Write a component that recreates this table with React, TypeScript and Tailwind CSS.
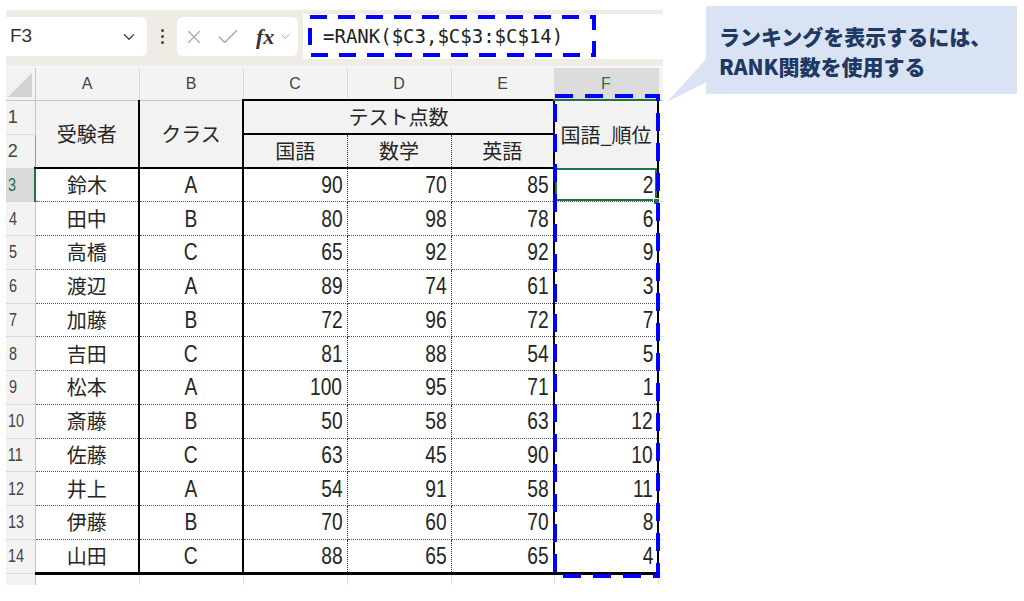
import { ChevronDown, X, Check } from 'lucide-react';

const data: [string, string, number, number, number, number][] = [
  ['鈴木', 'A', 90, 70, 85, 2],
  ['田中', 'B', 80, 98, 78, 6],
  ['高橋', 'C', 65, 92, 92, 9],
  ['渡辺', 'A', 89, 74, 61, 3],
  ['加藤', 'B', 72, 96, 72, 7],
  ['吉田', 'C', 81, 88, 54, 5],
  ['松本', 'A', 100, 95, 71, 1],
  ['斎藤', 'B', 50, 58, 63, 12],
  ['佐藤', 'C', 63, 45, 90, 10],
  ['井上', 'A', 54, 91, 58, 11],
  ['伊藤', 'B', 70, 60, 70, 8],
  ['山田', 'C', 88, 65, 65, 4],
];

const jp = "p-0 leading-none font-['Noto_Sans_CJK_JP',sans-serif] text-[20px] text-[#262626]";
const num = "p-0 leading-none font-['Liberation_Sans',sans-serif] text-[24px] text-[#262626]";
const rowHead =
  "p-0 leading-none bg-[#f3f3f3] border-b border-b-[#dadada] border-r border-r-[#c6c6c6] text-center pr-[15px] font-['Liberation_Sans',sans-serif] text-[18px] text-[#444]";
const colHead =
  "p-0 bg-[#f3f3f3] border-r border-r-[#dadada] border-b border-b-[#c6c6c6] font-['Liberation_Sans',sans-serif] text-[16px] font-normal text-[#444]";

const Narrow = ({ children, right }: { children: React.ReactNode; right?: boolean }) => (
  <span className={right ? 'inline-block scale-x-[0.8] origin-right' : 'inline-block scale-x-[0.8] origin-center'}>
    {children}
  </span>
);

const Sheet = () => {
  return (
    <table className="border-collapse table-fixed w-[657px]">
      <colgroup>
        <col className="w-[29px]" />
        <col className="w-[104px]" />
        <col className="w-[104px]" />
        <col className="w-[104px]" />
        <col className="w-[104px]" />
        <col className="w-[103px]" />
        <col className="w-[104px]" />
        <col className="w-[5px]" />
      </colgroup>
      <tbody>
        <tr className="h-[32px]">
          <th className="p-0 bg-[#f3f3f3] border-r border-r-[#c6c6c6] border-b border-b-[#c6c6c6] relative">
            <svg className="absolute right-[3px] bottom-[3px]" width="24" height="24" viewBox="0 0 24 24">
              <polygon points="24,0 24,24 0,24" fill="#d2d2d2" />
            </svg>
          </th>
          <th className={colHead}>A</th>
          <th className={colHead}>B</th>
          <th className={colHead}>C</th>
          <th className={colHead}>D</th>
          <th className={colHead}>E</th>
          <th className="p-0 bg-[#dcdcdc] border-r border-r-[#dadada] border-b-2 border-b-[#217346] font-['Liberation_Sans',sans-serif] text-[16px] font-normal text-[#217346]">
            F
          </th>
          <th className="p-0 bg-[#f3f3f3] border-b border-b-[#c6c6c6]" />
        </tr>
        <tr className="h-[34px]">
          <td className={rowHead}>1</td>
          <td rowSpan={2} className={`${jp} bg-[#f2f2f2] text-center border-l border-l-[#9a9a9a] border-t border-t-[#9a9a9a] border-r-2 border-r-black border-b-2 border-b-black`}>
            受験者
          </td>
          <td rowSpan={2} className={`${jp} bg-[#f2f2f2] text-center border-t border-t-[#9a9a9a] border-r-2 border-r-black border-b-2 border-b-black`}>
            クラス
          </td>
          <td colSpan={3} className={`${jp} bg-[#f2f2f2] text-center border-t-2 border-t-black border-r-2 border-r-black border-b-2 border-b-black`}>
            テスト点数
          </td>
          <td rowSpan={2} className={`${jp} bg-[#f2f2f2] text-center border-t border-t-[#2f6b45] border-r-2 border-r-black`}>
            国語_順位
          </td>
          <td className="p-0 border-b border-b-[#e1e1e1]" />
        </tr>
        <tr className="h-[34px]">
          <td className={rowHead}>2</td>
          <td className={`${jp} bg-[#f2f2f2] text-center border-r border-r-[#333] [border-right-style:dotted] border-b-2 border-b-black`}>国語</td>
          <td className={`${jp} bg-[#f2f2f2] text-center border-r border-r-[#333] [border-right-style:dotted] border-b-2 border-b-black`}>数学</td>
          <td className={`${jp} bg-[#f2f2f2] text-center border-r-2 border-r-black border-b-2 border-b-black`}>英語</td>
          <td className="p-0 border-b border-b-[#e1e1e1]" />
        </tr>
        {data.map((r, i) => {
          const last = i === data.length - 1;
          const bottom = last
            ? 'border-b-[3px] border-b-black'
            : 'border-b border-b-[#555] [border-bottom-style:dotted]';
          return (
            <tr key={i} className="h-[33.75px]">
              <td
                className={
                  i === 0
                    ? "p-0 leading-none bg-[#d9d9d9] border-b border-b-[#dadada] border-r-2 border-r-[#217346] text-center pr-[15px] font-['Liberation_Sans',sans-serif] text-[18px] text-[#217346]"
                    : rowHead
                }
              >
                <Narrow>{i + 3}</Narrow>
              </td>
              <td className={`${jp} text-center border-l border-l-[#9a9a9a] border-r-2 border-r-black ${bottom}`}>{r[0]}</td>
              <td className={`${num} text-center border-r-2 border-r-black ${bottom}`}>
                <Narrow>{r[1]}</Narrow>
              </td>
              <td className={`${num} text-right pr-[4px] border-r border-r-[#333] [border-right-style:dotted] ${bottom}`}>
                <Narrow right>{r[2]}</Narrow>
              </td>
              <td className={`${num} text-right pr-[4px] border-r border-r-[#333] [border-right-style:dotted] ${bottom}`}>
                <Narrow right>{r[3]}</Narrow>
              </td>
              <td className={`${num} text-right pr-[4px] border-r-2 border-r-black ${bottom}`}>
                <Narrow right>{r[4]}</Narrow>
              </td>
              <td
                className={`${num} text-right pr-[4px] border-r-2 border-r-black ${bottom} ${
                  i === 0 ? 'relative shadow-[inset_0_0_0_2px_#217346]' : ''
                }`}
              >
                <Narrow right>{r[5]}</Narrow>
                {i === 0 && (
                  <span className="absolute -bottom-[4px] -right-[3px] w-[7px] h-[7px] bg-[#217346] border border-white" />
                )}
              </td>
              <td className="p-0 border-b border-b-[#e1e1e1]" />
            </tr>
          );
        })}
        <tr className="h-[12px]">
          <td className="p-0 bg-[#f3f3f3] border-r border-r-[#c6c6c6]" />
          <td className="p-0 border-r border-r-[#e1e1e1]" />
          <td className="p-0 border-r border-r-[#e1e1e1]" />
          <td className="p-0 border-r border-r-[#e1e1e1]" />
          <td className="p-0 border-r border-r-[#e1e1e1]" />
          <td className="p-0 border-r border-r-[#e1e1e1]" />
          <td className="p-0 border-r border-r-[#e1e1e1]" />
          <td className="p-0" />
        </tr>
      </tbody>
    </table>
  );
};

const FormulaBar = () => {
  return (
    <div className="h-[56px] bg-[#efece6] flex items-start pt-[7px]">
      <div className="w-[141px] h-[39px] bg-white rounded-r-md flex items-center justify-between pl-[4px] pr-[9px]">
        <span className="font-['Liberation_Sans',sans-serif] text-[19px] text-[#333]">F3</span>
        <ChevronDown size={18} strokeWidth={1.8} className="text-[#444]" />
      </div>
      <div className="w-[30px] h-[39px] flex flex-col items-center justify-center gap-[3px]">
        <span className="w-[3px] h-[3px] rounded-full bg-[#444]" />
        <span className="w-[3px] h-[3px] rounded-full bg-[#444]" />
        <span className="w-[3px] h-[3px] rounded-full bg-[#444]" />
      </div>
      <div className="w-[121px] h-[39px] bg-white rounded-md flex items-center pl-[6px]">
        <X size={22} strokeWidth={1.2} className="text-[#a6a6a6]" />
        <Check size={26} strokeWidth={1.2} className="text-[#a6a6a6] ml-[10px]" />
        <span className="ml-[15px] font-['Liberation_Serif',serif] italic font-bold text-[22px] text-[#333] leading-none">
          fx
        </span>
        <ChevronDown size={15} strokeWidth={1.4} className="text-[#9a9a9a] ml-[4px]" />
      </div>
      <div className="flex-1 ml-[5px] -mt-[3px] h-[45px] bg-white flex items-center pl-[20px]">
        <span className="font-['DejaVu_Sans_Mono',monospace] text-[19px] text-[#222]">=RANK($C3,$C$3:$C$14)</span>
      </div>
    </div>
  );
};

const App = () => {
  return (
    <div className="relative w-[1024px] h-[601px] bg-white overflow-hidden flex items-start">
      <div className="w-[657px] ml-[6px] pt-[10px] flex flex-col">
        <FormulaBar />
        <div className="h-[2px] bg-[#f7f7f7]" />
        <Sheet />
      </div>
      <div className="relative ml-[43px] mt-[6px] w-[311px] h-[88px] bg-[#dae3f3] pl-[13px] pt-[15px]">
        <svg className="absolute -left-[40px] top-[50px]" width="41" height="50" viewBox="0 0 41 50">
          <polygon points="41,2 41,26 1,46" fill="#dae3f3" />
        </svg>
        <p className="font-['Noto_Sans_CJK_JP',sans-serif] font-black text-[21px] leading-[30px] text-[#203864]">
          ランキングを表示するには、
          <br />
          RANK関数を使用する
        </p>
      </div>
      <svg className="absolute left-[308px] top-[15px]" width="288" height="42" viewBox="0 0 288 42">
        <rect x="2" y="2" width="284" height="38" fill="none" stroke="#0000ff" strokeWidth="4" strokeDasharray="17 11" />
      </svg>
      <svg className="absolute left-[553px] top-[94px]" width="107" height="484" viewBox="0 0 107 484">
        <rect x="2" y="2" width="103" height="480" fill="none" stroke="#0000ff" strokeWidth="4" strokeDasharray="18 12" />
      </svg>
    </div>
  );
};

export default App;
